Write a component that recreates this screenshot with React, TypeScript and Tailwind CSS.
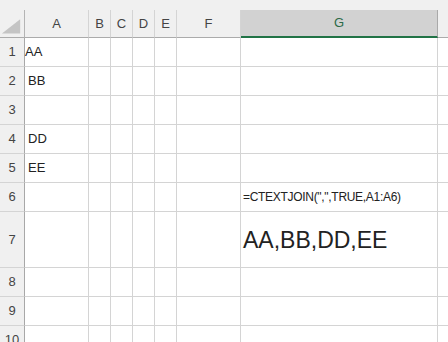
const cols = ["A", "B", "C", "D", "E", "F", "G"];

const rows: { n: number; h: string; a?: string; aPad?: string; g?: string; big?: boolean }[] = [
  { n: 1, h: "h-[29px]", a: "AA", aPad: "pl-0" },
  { n: 2, h: "h-[29px]", a: "BB" },
  { n: 3, h: "h-[29px]" },
  { n: 4, h: "h-[29px]", a: "DD" },
  { n: 5, h: "h-[29px]", a: "EE" },
  { n: 6, h: "h-[29px]", g: '=CTEXTJOIN(",",TRUE,A1:A6)' },
  { n: 7, h: "h-[56px]", g: "AA,BB,DD,EE", big: true },
  { n: 8, h: "h-[29px]" },
  { n: 9, h: "h-[29px]" },
  { n: 10, h: "h-[29px]" },
];

const colClass = "grid grid-cols-[25px_64px_22px_22px_22px_22px_64px_197px_1fr]";

const App = () => {
  return (
    <div className="w-[448px] h-[342px] overflow-hidden bg-white font-['Liberation_Sans',Arial,sans-serif] text-[12px] text-[#222]">
      {/* top strip */}
      <div className="h-[10px] bg-[#f0f0f0]" />

      {/* column headers */}
      <div className={`${colClass} h-[28px] bg-[#f0f0f0]`}>
        <div className="border-r border-b border-r-[#b4b4b4] border-b-[#ababab] flex">
          <svg width="25" height="27" viewBox="0 0 25 27">
            <polygon points="2,24 21,24 21,9" fill="#c4c4c4" />
          </svg>
        </div>
        {cols.map((c) =>
          c === "G" ? (
            <div
              key={c}
              className="bg-[#d2d2d2] border-r border-r-[#a9a9a9] border-b-2 border-b-[#217346] flex items-center justify-center text-[13px] text-[#2c6a48]"
            >
              {c}
            </div>
          ) : (
            <div
              key={c}
              className="border-r border-r-[#d4d4d4] border-b border-b-[#ababab] flex items-center justify-center text-[13px] text-[#444]"
            >
              {c}
            </div>
          )
        )}
        <div className="border-b border-b-[#ababab]" />
      </div>

      {/* rows */}
      {rows.map((r) => (
        <div key={r.n} className={`${colClass} ${r.h}`}>
          <div className="bg-[#f0f0f0] border-r border-b border-r-[#a8a8a8] border-b-[#d4d4d4] flex items-center justify-center text-[13px] text-[#444]">
            {r.n}
          </div>
          <div className={`border-r border-b border-[#d4d4d4] flex items-center ${r.aPad ?? "pl-[3px]"} text-[13px]`}>
            {r.a}
          </div>
          <div className="border-r border-b border-[#d4d4d4]" />
          <div className="border-r border-b border-[#d4d4d4]" />
          <div className="border-r border-b border-[#d4d4d4]" />
          <div className="border-r border-b border-[#d4d4d4]" />
          <div className="border-r border-b border-[#d4d4d4]" />
          <div
            className={`border-r border-b border-[#d4d4d4] flex items-center pl-[2px] whitespace-nowrap ${
              r.big ? "text-[23px] pt-[2px]" : "text-[12px] tracking-[-0.3px]"
            }`}
          >
            {r.g}
          </div>
          <div className="border-b border-[#d4d4d4]" />
        </div>
      ))}
    </div>
  );
};

export default App;
